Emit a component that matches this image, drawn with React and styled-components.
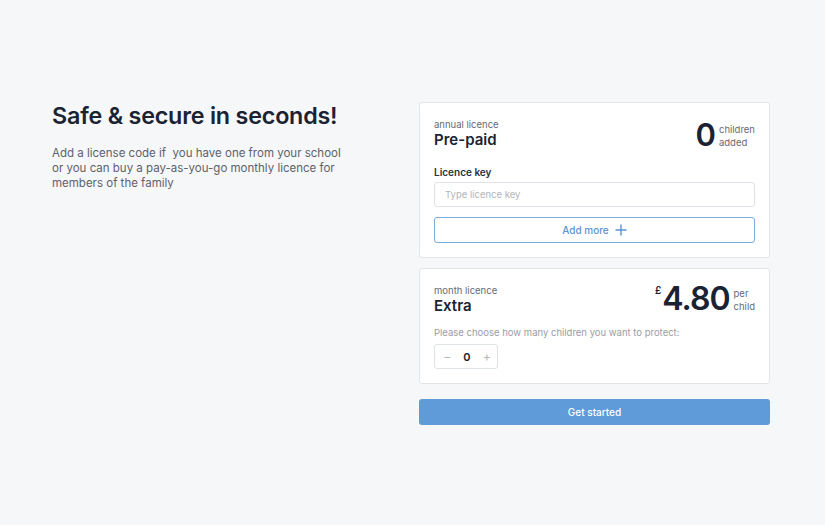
import styled, { createGlobalStyle } from "styled-components";

const Global = createGlobalStyle`
  html, body {
    margin: 0;
    background: #f6f7f9;
    font-family: "Inter", "Liberation Sans", sans-serif;
    color: #1b2232;
  }
`;

const Page = styled.main`
  display: flex;
  justify-content: space-between;
  align-items: flex-start;
  padding: 102px 55px 0 52px;
  height: 525px;
  box-sizing: border-box;
`;

const Intro = styled.section`
  width: 300px;
`;

const Title = styled.h1`
  margin: 0;
  font-size: 23.3px;
  font-weight: 600;
  letter-spacing: -0.2px;
  line-height: 28px;
  color: #1b2232;
`;

const Lead = styled.p`
  margin: 16px 0 0;
  font-size: 11.5px;
  line-height: 15px;
  color: #5d6169;
`;

const Column = styled.section`
  width: 351px;
  display: flex;
  flex-direction: column;
  gap: 10px;
`;

const Card = styled.div`
  background: #fff;
  border: 1px solid #e2e4e8;
  border-radius: 3px;
  padding: 14px 14px 14px 14px;
`;

const CardHead = styled.div`
  display: flex;
  justify-content: space-between;
  align-items: flex-start;
`;

const Kicker = styled.div`
  font-size: 9.5px;
  color: #666a72;
  line-height: 12px;
  margin-top: 2px;
`;

const PlanName = styled.div`
  font-size: 15px;
  font-weight: 600;
  line-height: 18px;
  color: #1b2232;
`;

const Stat = styled.div`
  display: flex;
  align-items: flex-start;
  gap: 4px;
`;

const BigNum = styled.span`
  font-size: ${(p) => p.$size}px;
  margin-top: ${(p) => p.$top || 0}px;
  font-weight: 600;
  line-height: 1;
  letter-spacing: -1px;
  color: #1b2232;
`;

const Currency = styled.span`
  font-size: 10px;
  font-weight: 600;
  margin-top: 1px;
  margin-right: -3px;
`;

const StatNote = styled.span`
  font-size: 9.5px;
  line-height: 13px;
  color: #666a72;
  padding-top: ${(p) => p.$pad}px;
`;

const Label = styled.div`
  font-size: 10px;
  font-weight: 600;
  color: #2a3140;
  margin: 16px 0 4px;
`;

const Input = styled.input`
  display: block;
  width: 100%;
  box-sizing: border-box;
  height: 25px;
  border: 1px solid #dfe2e6;
  border-radius: 3px;
  padding: 0 10px;
  font-family: inherit;
  font-size: 9.5px;
  &::placeholder {
    color: #b2b5ba;
  }
`;

const OutlineButton = styled.button`
  display: flex;
  align-items: center;
  justify-content: center;
  gap: 6px;
  width: 100%;
  height: 26px;
  margin-top: 10px;
  background: #fff;
  border: 1.5px solid #7aaede;
  border-radius: 3px;
  color: #5b93cf;
  font-family: inherit;
  font-size: 10px;
  font-weight: 500;
`;

const Hint = styled.div`
  font-size: 9.5px;
  color: #9a9da3;
  margin: 12px 0 6px;
`;

const Stepper = styled.div`
  display: inline-flex;
  align-items: center;
  justify-content: space-between;
  width: 64px;
  height: 25px;
  box-sizing: border-box;
  padding: 0 6px 0 8px;
  border: 1px solid #dfe2e6;
  border-radius: 3px;
`;

const StepBtn = styled.span`
  color: #b6b9be;
  font-size: 13px;
  line-height: 1;
`;

const StepValue = styled.span`
  font-size: 11px;
  font-weight: 600;
`;

const Primary = styled.button`
  margin-top: 5px;
  height: 26px;
  width: 100%;
  border: none;
  border-radius: 3px;
  background: #5f9bd9;
  color: #fff;
  font-family: inherit;
  font-size: 10px;
  font-weight: 500;
`;

export default function App() {
  return (
    <>
      <Global />
      <Page>
        <Intro>
          <Title>Safe &amp; secure in seconds!</Title>
          <Lead>
            Add a license code if&nbsp; you have one from your school
            <br />
            or you can buy a pay-as-you-go monthly licence for
            <br />
            members of the family
          </Lead>
        </Intro>
        <Column>
          <Card>
            <CardHead>
              <div>
                <Kicker>annual licence</Kicker>
                <PlanName>Pre-paid</PlanName>
              </div>
              <Stat>
                <BigNum $size={31} $top={2}>0</BigNum>
                <StatNote $pad={6}>
                  children
                  <br />
                  added
                </StatNote>
              </Stat>
            </CardHead>
            <Label>Licence key</Label>
            <Input placeholder="Type licence key" />
            <OutlineButton>
              Add more
              <svg width="12" height="12" viewBox="0 0 12 12">
                <path d="M6 0.5v11M0.5 6h11" stroke="#5b93cf" strokeWidth="1.4" />
              </svg>
            </OutlineButton>
          </Card>
          <Card>
            <CardHead>
              <div>
                <Kicker>month licence</Kicker>
                <PlanName>Extra</PlanName>
              </div>
              <Stat>
                <Currency>£</Currency>
                <BigNum $size={32}>4.80</BigNum>
                <StatNote $pad={4}>
                  per
                  <br />
                  child
                </StatNote>
              </Stat>
            </CardHead>
            <Hint>Please choose how many children you want to protect:</Hint>
            <Stepper>
              <StepBtn>−</StepBtn>
              <StepValue>0</StepValue>
              <StepBtn>+</StepBtn>
            </Stepper>
          </Card>
          <Primary>Get started</Primary>
        </Column>
      </Page>
    </>
  );
}
